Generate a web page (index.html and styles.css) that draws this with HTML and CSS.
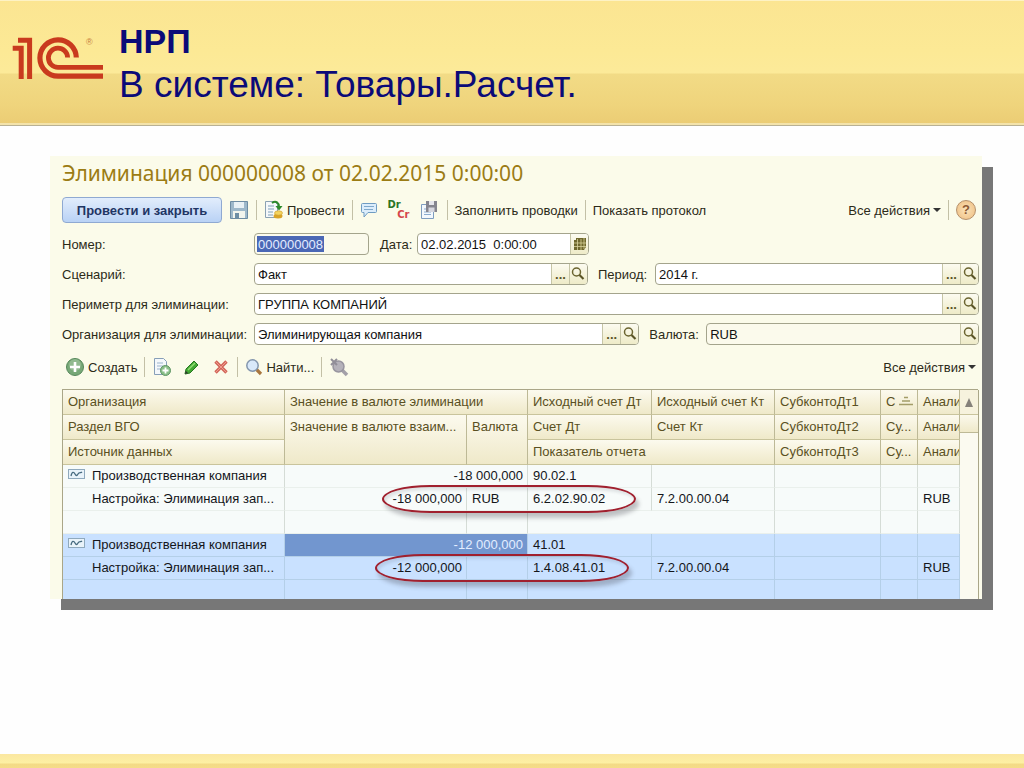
FILE: index.html
```html
<!DOCTYPE html>
<html lang="ru">
<head>
<meta charset="utf-8">
<title>НРП</title>
<link rel="stylesheet" href="styles.css">
</head>
<body>
<svg class="defs" aria-hidden="true">
  <symbol id="lens" viewBox="0 0 16 16"><circle cx="6.5" cy="6" r="4" fill="none" stroke="#6b6430" stroke-width="1.5"/><path d="M9.5 9l4 4" stroke="#5a5426" stroke-width="2.2"/></symbol>
  <symbol id="wave" viewBox="0 0 18 11"><rect x=".5" y=".5" width="16" height="9" fill="#e9f3fa" stroke="#8fa9bd"/><path d="M3 7c1-5 3-4 4-2s2 2 3 0 3-1 4-2" fill="none" stroke="#476b80" stroke-width="1.3"/></symbol>
</svg>
<div class="slide">
  <header class="banner">
    <svg class="logo" viewBox="12 36 92 44" role="img" aria-label="1С">
      <g fill="none" stroke="#c93a1e">
        <path d="M18 40.2H29.6V79M12.7 48.2H21.2V79" stroke-width="5"/>
        <path d="M76.3 57.5A18.2 18.2 0 1 0 58 76.2H103" stroke-width="5.2"/>
        <path d="M67.6 57.5A9.6 9.6 0 1 0 58 67.4H103" stroke-width="4.8"/>
      </g>
      <text x="86" y="45" class="reg">®</text>
    </svg>
    <h1 class="heading"><b>НРП</b><br>В системе: Товары.Расчет.</h1>
  </header>

  <main class="window">
    <h2 class="doc-title">Элиминация 000000008 от 02.02.2015 0:00:00</h2>

    <div class="toolbar">
      <button class="primary">Провести и закрыть</button>
      <button class="tool save" aria-label="Записать"><svg width="20" height="20" viewBox="0 0 20 20"><path d="M1.5 1.5h17v17h-17z" fill="#9db8ca" stroke="#6d8ca3"/><path d="M5 2h10v6H5z" fill="#e8f1f5"/><path d="M4 11h12v7H4z" fill="#f2f5ee"/><path d="M6 13h4v5H6z" fill="#6d8ea5"/></svg></button>
      <i class="sep"></i>
      <button class="tool post"><svg width="20" height="20" viewBox="0 0 20 20"><path d="M1.500 1.500h9l3 3v13h-12z" fill="#f5f8fa" stroke="#8ba1b3"/><path d="M4 6h6M4 9h6M4 12h5M4 15h5" stroke="#7fa0bb"/><path d="M8 3c4-3 7 0 7 4" fill="none" stroke="#2c8a2c" stroke-width="2"/><path d="M11.500 6h7L15 10.500z" fill="#2c8a2c"/><ellipse cx="14" cy="16" rx="4.500" ry="2.500" fill="#d9a428"/><ellipse cx="14.500" cy="13" rx="4" ry="2.200" fill="#f4d460" stroke="#c99a2c" stroke-width=".6"/></svg>Провести</button>
      <i class="sep"></i>
      <button class="tool" aria-label="Комментарий"><svg width="18" height="18" viewBox="0 0 18 18"><path d="M2.500 2.500h13q1 0 1 1v7q0 1-1 1H8L4 16v-4.500H2.500q-1 0-1-1v-7q0-1 1-1z" fill="#dcedfb" stroke="#6f9cc2"/><path d="M4 5.500h10M4 8.500h9" stroke="#7fa9cc"/></svg></button>
      <button class="tool drcr" aria-label="Проводки"><span class="dr">Dr</span><span class="cr">Cr</span></button>
      <button class="tool" aria-label="Сохранить отчет"><svg width="20" height="20" viewBox="0 0 20 20"><path d="M1.500 4.500h12v14h-12z" fill="#f3f8fd" stroke="#7e9dc0"/><path d="M4 12h7M4 14.500h7M4 9h3" stroke="#8bacd0"/><path d="M6 1h11v11H6z" fill="#85858f"/><path d="M9 1h5v4H9z" fill="#e6e6ec"/><path d="M8.500 7.500h6v4.500h-6z" fill="#d7d7df"/></svg></button>
      <i class="sep"></i>
      <button class="tool">Заполнить проводки</button>
      <i class="sep"></i>
      <button class="tool">Показать протокол</button>
      <button class="tool push">Все действия<span class="caret"></span></button>
      <i class="sep"></i>
      <button class="help" aria-label="Справка">?</button>
    </div>

    <form class="form">
      <div class="line">
        <label class="lead" for="num">Номер:</label>
        <span class="box short pale"><input id="num" class="picked" value="000000008"></span>
        <label class="mid" for="date">Дата:</label>
        <span class="box date"><input id="date" value="02.02.2015  0:00:00"><button type="button" class="pick" aria-label="Календарь"><svg width="14" height="14" viewBox="0 0 14 14"><path d="M3 1h10v9l-2 3H1V3h2z" fill="#6f682c"/><path d="M1 6h12M1 9.500h12M4.500 2v11M8 2v11M11 1v11" stroke="#d8d29a" stroke-width=".8"/></svg></button></span>
      </div>
      <div class="line">
        <label class="lead" for="scn">Сценарий:</label>
        <span class="box scenario"><input id="scn" value="Факт"><button type="button" class="pick dots">...</button><button type="button" class="pick" aria-label="Открыть"><svg class="ic16"><use href="#lens"/></svg></button></span>
        <label class="mid wide" for="per">Период:</label>
        <span class="box period"><input id="per" value="2014 г."><button type="button" class="pick dots">...</button><button type="button" class="pick" aria-label="Открыть"><svg class="ic16"><use href="#lens"/></svg></button></span>
      </div>
      <div class="line">
        <label class="lead" for="prm">Периметр для элиминации:</label>
        <span class="box grow"><input id="prm" value="ГРУППА КОМПАНИЙ"><button type="button" class="pick dots">...</button><button type="button" class="pick" aria-label="Открыть"><svg class="ic16"><use href="#lens"/></svg></button></span>
      </div>
      <div class="line">
        <label class="lead" for="org">Организация для элиминации:</label>
        <span class="box company"><input id="org" value="Элиминирующая компания"><button type="button" class="pick dots">...</button><button type="button" class="pick" aria-label="Открыть"><svg class="ic16"><use href="#lens"/></svg></button></span>
        <label class="mid wide" for="cur">Валюта:</label>
        <span class="box currency pale"><input id="cur" value="RUB"><button type="button" class="pick" aria-label="Открыть"><svg class="ic16"><use href="#lens"/></svg></button></span>
      </div>
    </form>

    <div class="toolbar lower">
      <button class="tool create"><svg width="20" height="20" viewBox="0 0 20 20"><circle cx="10" cy="10" r="8.500" fill="#77a877" stroke="#55875a"/><circle cx="10" cy="8" r="6" fill="#a3c7a0" opacity=".6"/><path d="M10 5v10M5 10h10" stroke="#fff" stroke-width="2.600"/></svg>Создать</button>
      <i class="sep"></i>
      <button class="tool" aria-label="Скопировать"><svg width="20" height="20" viewBox="0 0 20 20"><path d="M2.500 1.500h9l3 3v13h-12z" fill="#f4f8fb" stroke="#879fb8"/><path d="M5 6h6M5 9h6M5 12h4" stroke="#9bb4cd"/><circle cx="13.500" cy="13.500" r="5" fill="#8abf88" stroke="#5d9463"/><path d="M13.500 10.500v6M10.500 13.500h6" stroke="#fff" stroke-width="1.800"/></svg></button>
      <button class="tool roomy" aria-label="Изменить"><svg width="18" height="18" viewBox="0 0 18 18"><path d="M3 11L11 3l4 4-8 8-5 1z" fill="#42a832" stroke="#26771f"/><path d="M5 12l7-7" stroke="#93dd74" stroke-width="1.500"/><path d="M2 16l1-3 2 2z" fill="#333"/></svg></button>
      <button class="tool" aria-label="Удалить"><svg width="18" height="18" viewBox="0 0 18 18"><path d="M3.500 3.500l11 11M14.500 3.500l-11 11" stroke="#d2685c" stroke-width="3.400"/><path d="M3.500 3.500l11 11M14.500 3.500l-11 11" stroke="#f09a8c" stroke-width="1"/></svg></button>
      <i class="sep"></i>
      <button class="tool find"><svg width="18" height="18" viewBox="0 0 18 18"><path d="M11 11l5 5" stroke="#a8763f" stroke-width="3.200"/><circle cx="7.500" cy="7.500" r="5.700" fill="#d9e9fa" stroke="#8396ad" stroke-width="1.500"/></svg>Найти...</button>
      <i class="sep"></i>
      <button class="tool" aria-label="Отменить поиск"><svg width="20" height="20" viewBox="0 0 20 20"><path d="M12 12l6 6" stroke="#a3a0a8" stroke-width="3.500"/><circle cx="9.500" cy="9.500" r="5.500" fill="#b5b2ba" stroke="#98959f" stroke-width="1.500"/><path d="M2 2l6 6M8 2L2 8" stroke="#918e98" stroke-width="2"/></svg></button>
      <button class="tool push">Все действия<span class="caret"></span></button>
    </div>

    <div class="grid">
      <table class="data">
        <colgroup><col class="c1"><col class="c2"><col class="c3"><col class="c4"><col class="c5"><col class="c6"><col class="c7"><col class="c8"></colgroup>
        <thead>
          <tr><th>Организация</th><th colspan="2">Значение в валюте элиминации</th><th>Исходный счет Дт</th><th>Исходный счет Кт</th><th>СубконтоДт1</th><th class="sorted">С <svg width="14" height="10" viewBox="0 0 14 10"><path d="M5 1.500h4M3 5h8M0 8.500h14" stroke="#a39d68" stroke-width="1.600"/></svg></th><th class="cut">Анали</th></tr>
          <tr><th>Раздел ВГО</th><th rowspan="2">Значение в валюте взаим...</th><th rowspan="2">Валюта</th><th>Счет Дт</th><th>Счет Кт</th><th>СубконтоДт2</th><th>Су...</th><th class="cut">Анали</th></tr>
          <tr><th>Источник данных</th><th colspan="2">Показатель отчета</th><th>СубконтоДт3</th><th>Су...</th><th class="cut">Анали</th></tr>
        </thead>
        <tbody>
          <tr><td class="first"><svg class="mark"><use href="#wave"/></svg>Производственная компания</td><td colspan="2" class="num">-18 000,000</td><td>90.02.1</td><td></td><td></td><td></td><td></td></tr>
          <tr><td class="nest">Настройка: Элиминация зап...</td><td class="num">-18 000,000</td><td>RUB</td><td>6.2.02.90.02</td><td>7.2.00.00.04</td><td></td><td></td><td>RUB</td></tr>
          <tr><td></td><td></td><td></td><td colspan="2"></td><td></td><td></td><td></td></tr>
        </tbody>
        <tbody class="current">
          <tr><td class="first"><svg class="mark"><use href="#wave"/></svg>Производственная компания</td><td colspan="2" class="num active">-12 000,000</td><td>41.01</td><td></td><td></td><td></td><td></td></tr>
          <tr><td class="nest">Настройка: Элиминация зап...</td><td class="num">-12 000,000</td><td></td><td>1.4.08.41.01</td><td>7.2.00.00.04</td><td></td><td></td><td>RUB</td></tr>
          <tr class="clipped"><td></td><td></td><td></td><td colspan="2"></td><td></td><td></td><td></td></tr>
        </tbody>
      </table>
      <div class="scroll"><div class="arrow"></div><div class="thumb"></div></div>
      <div class="ring ring-a"></div>
      <div class="ring ring-b"></div>
    </div>
  </main>
  <footer class="strip"></footer>
</div>
</body>
</html>
```
FILE: styles.css
```css
* { box-sizing: border-box; }
body { margin: 0; background: #fefefe; font-family: "Liberation Sans", Arial, sans-serif; font-size: 13px; color: #2c2a18; }
button, input { font: inherit; color: inherit; margin: 0; }
.defs { position: absolute; width: 0; height: 0; }
.slide { min-height: 100vh; display: flex; flex-direction: column; }

.banner { display: flex; align-items: flex-start; height: 126px; padding: 19px 12px 0; border-bottom: 1px solid #b9b193; box-shadow: inset 0 -2px 0 #f3e3ab, inset 0 1px 0 #fdf2c4;
  background: linear-gradient(#fbe592 0, #fce995 50px, #fcea99 73px, #f2db86 74px, #efd47c 105px, #ebcc74 124px); }
.logo { width: 92px; height: 44px; margin-top: 17px; overflow: visible; }
.reg { font-size: 9px; fill: #c9803a; }
.heading { margin: 0 0 0 15px; font-size: 37px; line-height: 43px; font-weight: 400; color: #0b0a78; }
.heading b { font-size: 34px; }

.window { margin: 30px 42px 0 50px; padding: 3px 3px 0 12px; background: #fbfbea; box-shadow: 11px 11px 0 #777; }
.doc-title { margin: 0; font: 400 21px/28px "Noto Sans", sans-serif; color: #9b7c14; }

.toolbar { display: flex; align-items: center; height: 26px; margin-top: 10px; padding-right: 3px; gap: 7px; }
.primary { height: 26px; width: 160px; padding: 0; white-space: nowrap; border: 1px solid #8fa9d2; border-radius: 4px; background: linear-gradient(#e2edfc, #b9d2f5); color: #1f3564; font-weight: 700; }
.tool { display: flex; align-items: center; gap: 3px; padding: 0; border: 0; background: none; white-space: nowrap; }
.tool svg { flex: none; }
.sep { width: 1px; height: 20px; background: #c3c0a6; }
.push { margin-left: auto; }
.caret { border: 4px solid transparent; border-top-color: #333; border-bottom: 0; }
.drcr { flex-direction: column; align-items: stretch; gap: 0; width: 22px; margin: 0 3px; font-family: "DejaVu Sans", sans-serif; font-size: 10px; line-height: 10px; font-weight: 700; }
.dr { color: #2a7426; text-align: left; }
.cr { color: #d5464a; text-align: right; }
.help { width: 20px; height: 20px; padding: 0; border: 1px solid #b5906b; border-radius: 50%; background: radial-gradient(#fbe3ba, #eebd80); color: #8c5a34; font-weight: 700; line-height: 18px; }
.lower { margin-top: 9px; padding-left: 3px; }
.roomy { padding: 0 4px; }

.form { margin-top: 10px; display: grid; gap: 8px; }
.line { display: flex; align-items: center; }
.lead { flex: none; width: 192px; white-space: nowrap; }
.mid { flex: none; width: 48px; padding-left: 11px; white-space: nowrap; }
.wide { width: 67px; padding-left: 10px; }
.box { display: flex; height: 22px; border: 1px solid #a4a48c; border-radius: 4px; background: #fff; overflow: hidden; }
.box input { flex: 1; min-width: 0; width: 0; padding: 0 3px; border: 0; background: none; color: #111; outline: 0; white-space: pre; }
.pale { background: #fbfaec; }
.short { width: 115px; }
.date { width: 172px; }
.grow { flex: 1; }
.scenario { flex: 334; }
.period { flex: 324; }
.company { flex: 385; }
.currency { flex: 272; }
.box .picked { flex: none; width: 67px; height: 16px; margin: 2px 0 0 2px; padding: 0 1px; background: #4a67b5; color: #e4ecff; }
.pick { display: flex; align-items: center; justify-content: center; width: 18px; padding: 0; border: 0; border-left: 1px solid #c6c5a6; background: linear-gradient(#fcfbf0, #eeebc8); color: #5a5426; }
.dots { font-weight: 700; }
.ic16 { width: 16px; height: 16px; }

.grid { position: relative; display: flex; margin-top: 9px; margin-right: 1px; border-top: 1px solid #aaa688; border-left: 1px solid #aaa688; }
.data { width: calc(100% - 19px); table-layout: fixed; border-collapse: separate; border-spacing: 0; }
.c1 { width: 222px; } .c2 { width: 182px; } .c3 { width: 61px; } .c4 { width: 124px; }
.c5 { width: 123px; } .c6 { width: 106px; } .c7 { width: 37px; } .c8 { width: 42px; }
.data th { height: 25px; padding: 4px 5px 0; border-right: 1px solid #bdb996; border-bottom: 1px solid #c9c49c; background: linear-gradient(#fcfaee, #efe9c9); color: #5a5022; font-weight: 400; text-align: left; vertical-align: top; white-space: nowrap; overflow: hidden; line-height: 16px; }
.data td { height: 23px; padding: 0 5px; border-right: 1px solid #d5dcd6; border-bottom: 1px solid #eaf0ec; background: #f7fbfa; color: #14161a; white-space: nowrap; overflow: hidden; line-height: 16px; }
.data .num { text-align: right; padding-right: 4px; }
.data .nest { padding-left: 29px; }
.mark { width: 18px; height: 11px; margin-right: 6px; }
.current td { background: #c9e1ff; border-color: #b4cfe8; }
.current .active { background: #7296cf; color: #e2edff; }
.data .clipped td { height: 19px; border-bottom: 0; }
.data .cut { padding-right: 0; }
.scroll { flex: none; width: 19px; background: #fbfaf0; border-right: 1px solid #aaa688; }
.arrow { display: flex; justify-content: center; align-items: center; height: 25px; border-bottom: 1px solid #c9c49c; background: #f6f2dd; }
.arrow::before { content: ""; border: 4px solid transparent; border-bottom: 9px solid #85817a; border-top: 0; }
.thumb { height: 18px; border-bottom: 1px solid #bdb996; background: linear-gradient(#fbf9ec, #efe9c9); }
.ring { position: absolute; width: 254px; height: 28px; border: 2px solid #a0202e; border-radius: 48px / 14px; box-shadow: 3px 5px 4px rgba(60, 60, 70, .3), inset 2px 3px 3px rgba(60, 60, 70, .12); }
.ring-a { left: 319px; top: 95px; }
.ring-b { left: 312px; top: 164px; }

.strip { height: 14px; margin-top: auto; background: linear-gradient(#fbe7a0 0, #fdf0a4 9px, #f3da86 10px, #f5dc88 14px); }
```
